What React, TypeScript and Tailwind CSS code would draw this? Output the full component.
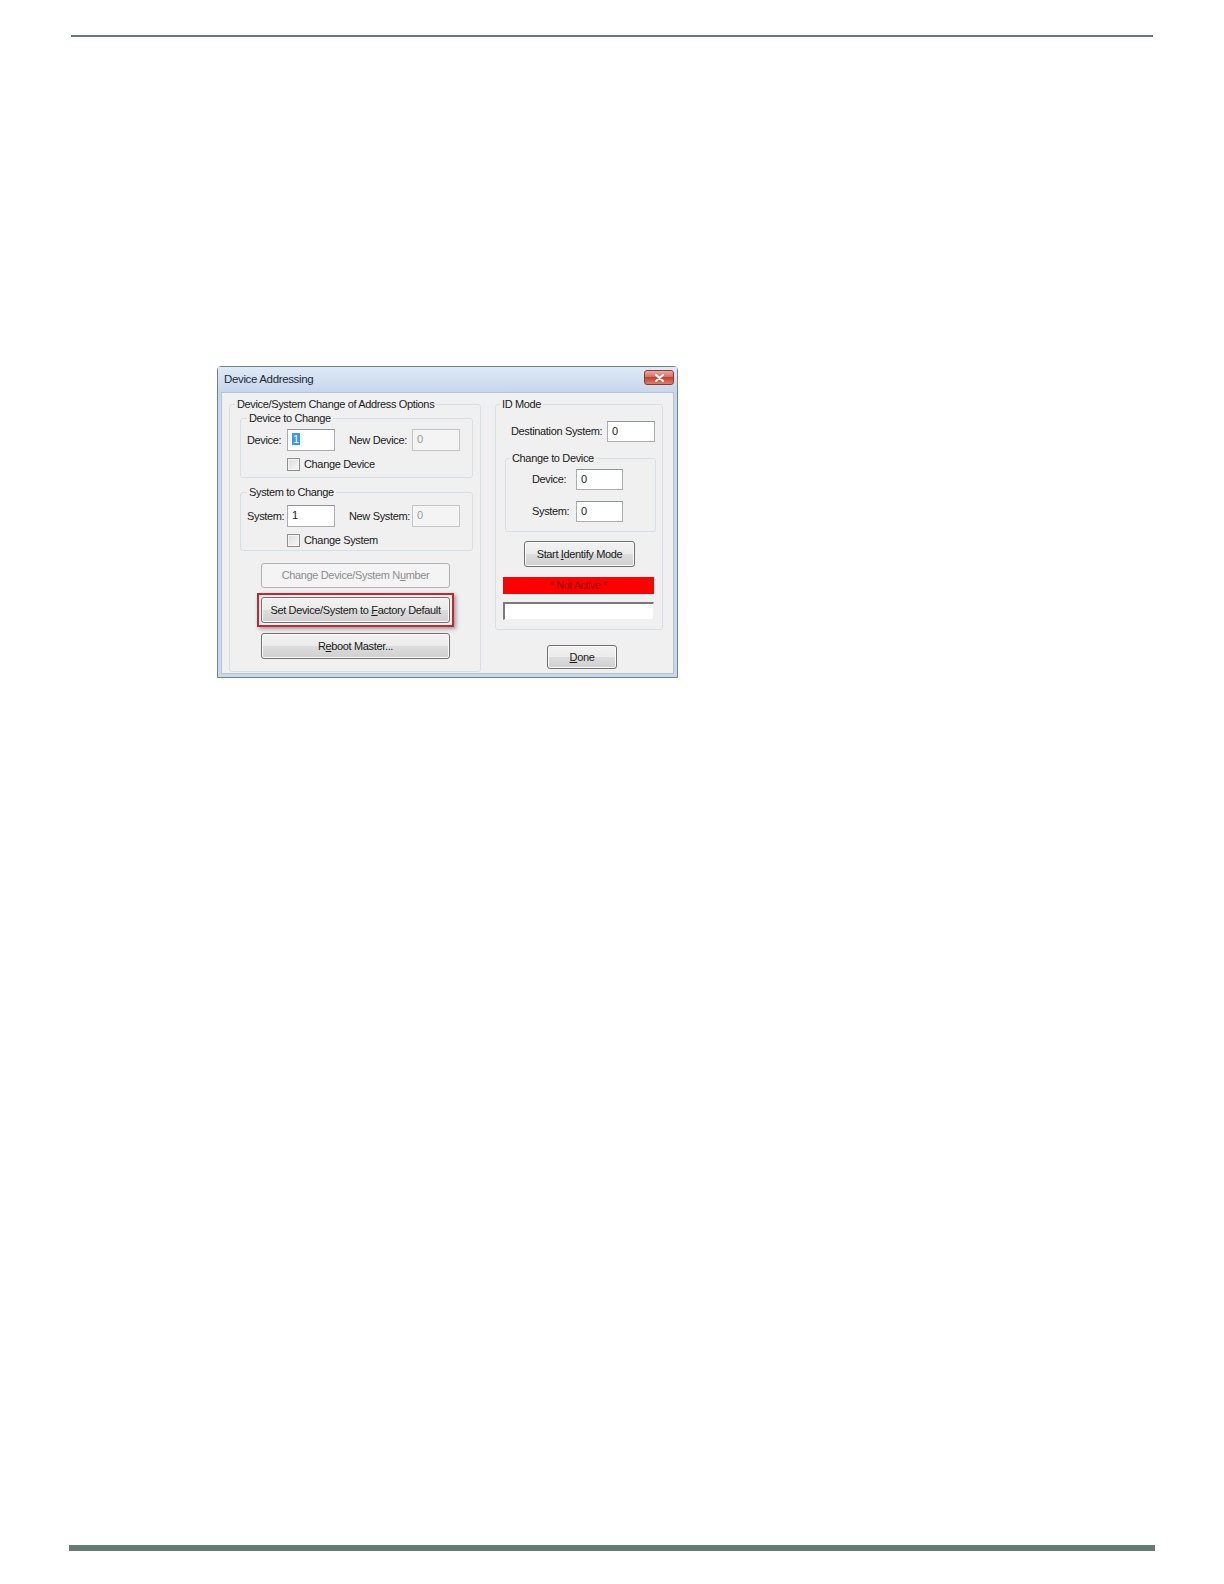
import React from "react";

const btnBase =
  "flex items-center justify-center rounded-[3px] border border-[#707070] bg-[linear-gradient(#f2f2f2_0%,#ebebeb_50%,#dddddd_50%,#cfcfcf_100%)] shadow-[inset_0_0_0_1px_#fbfbfb] text-[#1a1a1a]";
const btnDisabled =
  "flex items-center justify-center rounded-[3px] border border-[#adb2b5] bg-[#f4f4f4] text-[#8d8d8d]";

function GroupBox({
  label,
  className,
  labelClass,
  children,
}: {
  label: string;
  className: string;
  labelClass: string;
  children?: React.ReactNode;
}) {
  return (
    <div className={"flex flex-col rounded-[3px] border border-[#d5dfe5] " + className}>
      <div className={"-mt-[7px] h-[13px] self-start bg-[#f0f0f0] px-[2px] leading-[13px] " + labelClass}>
        {label}
      </div>
      {children}
    </div>
  );
}

function TextBox({ value, w, h, disabled }: { value: React.ReactNode; w: string; h: string; disabled?: boolean }) {
  return (
    <div
      className={
        (disabled
          ? "border-[#c2c6c9] bg-[#f4f4f4] text-[#9a9a9a] "
          : "border-[#abadb3] border-t-[#8e949c] bg-white text-[#1a1a1a] ") +
        "border pl-[4px] pt-[2px] leading-[14px] " +
        w +
        " " +
        h
      }
    >
      {value}
    </div>
  );
}

function CheckBox() {
  return (
    <div className="h-[13px] w-[13px] border border-[#8e8f8f] bg-[linear-gradient(135deg,#dcdcdc,#f8f8f8)] shadow-[inset_0_0_0_1px_#f4f4f4]" />
  );
}

export default function App() {
  return (
    <div className="flex h-[1584px] w-[1224px] flex-col bg-white font-['Liberation_Sans',Arial,sans-serif] text-[11px] tracking-[-0.35px] text-[#1a1a1a]">
      <div className="ml-[71px] mt-[35px] h-[2px] w-[1082px] bg-[#647d74]" />

      {/* Dialog */}
      <div className="ml-[217px] mt-[329px] flex h-[312px] w-[461px] flex-col rounded-t-[4px] border border-[#6f8296] bg-[#c8d8eb]">
        {/* Title bar */}
        <div className="flex h-[25px] items-center bg-[linear-gradient(#dfeaf6,#c6d7eb)] pl-[6px] pr-[3px]">
          <span className="text-[11.5px] text-[#1e2a3a]">Device Addressing</span>
          <div className="ml-auto mt-[-4px] flex h-[15px] w-[30px] items-center justify-center rounded-[3px] border border-[#8a3a32] bg-[linear-gradient(#e9aca2_0%,#d7675a_50%,#c63f31_50%,#d9806d_100%)]">
            <svg width="9" height="8" viewBox="0 0 9 8">
              <path d="M1 1 L8 7 M8 1 L1 7" stroke="#ffffff" strokeWidth="2" strokeLinecap="round" />
            </svg>
          </div>
        </div>

        {/* Body */}
        <div className="mx-[3px] mb-[3px] flex flex-1 border border-[#b5c4d4] bg-[#f0f0f0] pl-[7px] pt-[11px]">
          {/* Left group */}
          <GroupBox
            label="Device/System Change of Address Options"
            className="h-[268px] w-[252px]"
            labelClass="ml-[5px]"
          >
            <GroupBox label="Device to Change" className="ml-[10px] mt-[7px] h-[60px] w-[233px]" labelClass="ml-[6px]">
              <div className="mt-[4px] flex items-center pl-[6px]">
                <span className="w-[40px]">Device:</span>
                <TextBox
                  w="w-[48px]"
                  h="h-[22px]"
                  value={<span className="bg-[#3399ff] px-[1px] text-white">1</span>}
                />
                <span className="ml-[14px] w-[63px]">New Device:</span>
                <TextBox w="w-[48px]" h="h-[22px]" value="0" disabled />
              </div>
              <div className="mt-[5px] flex items-center gap-[4px] pl-[46px]">
                <CheckBox />
                <span>Change Device</span>
              </div>
            </GroupBox>

            <GroupBox label="System to Change" className="ml-[10px] mt-[14px] h-[59px] w-[233px]" labelClass="ml-[6px]">
              <div className="mt-[6px] flex items-center pl-[6px]">
                <span className="w-[40px]">System:</span>
                <TextBox w="w-[48px]" h="h-[22px]" value="1" />
                <span className="ml-[14px] w-[63px]">New System:</span>
                <TextBox w="w-[48px]" h="h-[22px]" value="0" disabled />
              </div>
              <div className="mt-[5px] flex items-center gap-[4px] pl-[46px]">
                <CheckBox />
                <span>Change System</span>
              </div>
            </GroupBox>

            <div className={btnDisabled + " ml-[31px] mt-[12px] h-[25px] w-[189px]"}>
              <span>
                Change Device/System N<span className="underline">u</span>mber
              </span>
            </div>

            <div className="ml-[27px] mt-[5px] w-[197px] border-2 border-[#c8262e] p-[2px] shadow-[2px_2px_4px_rgba(0,0,0,0.35)]">
              <div className={btnBase + " h-[26px] w-[189px]"}>
                <span>
                  Set Device/System to <span className="underline">F</span>actory Default
                </span>
              </div>
            </div>

            <div className={btnBase + " ml-[31px] mt-[6px] h-[26px] w-[189px]"}>
              <span>
                R<span className="underline">e</span>boot Master...
              </span>
            </div>
          </GroupBox>

          {/* Right column */}
          <div className="ml-[14px] flex flex-col">
            <GroupBox label="ID Mode" className="h-[226px] w-[168px]" labelClass="ml-[4px]">
              <div className="mt-[10px] flex items-center pl-[15px]">
                <span className="w-[96px]">Destination System:</span>
                <TextBox w="w-[48px]" h="h-[21px]" value="0" />
              </div>

              <GroupBox label="Change to Device" className="ml-[9px] mt-[16px] h-[74px] w-[151px]" labelClass="ml-[4px]">
                <div className="mt-[4px] flex items-center pl-[26px]">
                  <span className="w-[44px]">Device:</span>
                  <TextBox w="w-[47px]" h="h-[21px]" value="0" />
                </div>
                <div className="mt-[11px] flex items-center pl-[26px]">
                  <span className="w-[44px]">System:</span>
                  <TextBox w="w-[47px]" h="h-[21px]" value="0" />
                </div>
              </GroupBox>

              <div className={btnBase + " ml-[28px] mt-[9px] h-[26px] w-[111px]"}>
                <span>
                  Start <span className="underline">I</span>dentify Mode
                </span>
              </div>

              <div className="ml-[7px] mt-[10px] flex h-[17px] w-[151px] items-center justify-center bg-[#ff0000] text-[10.5px] text-[#8a0000]">
                * Not Active *
              </div>

              <div className="ml-[7px] mt-[8px] h-[18px] w-[151px] border-b border-l-2 border-r border-t-2 border-[#7a7a7a] border-b-[#f0f0f0] border-r-[#f0f0f0] bg-white" />
            </GroupBox>

            <div className={btnBase + " ml-[52px] mt-[15px] h-[24px] w-[70px]"}>
              <span>
                <span className="underline">D</span>one
              </span>
            </div>
          </div>
        </div>
      </div>

      <div className="flex-1" />
      <div className="mb-[33px] ml-[69px] h-[6px] w-[1086px] bg-[#647d74]" />
    </div>
  );
}
